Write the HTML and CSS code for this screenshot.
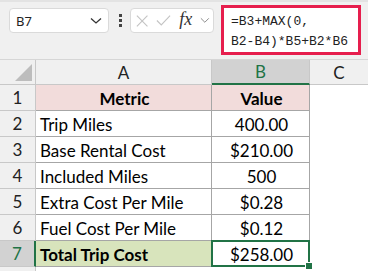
FILE: index.html
```html
<!DOCTYPE html>
<html lang="en">
<head>
    <meta charset="UTF-8">
    <title>Trip Cost</title>
    <link rel="stylesheet" href="styles.css">
</head>
<body>
    <div class="toolbar">
        <div class="namebox">
            <span>B7</span>
            <svg width="12" height="8" viewBox="0 0 12 8"><path d="M1 1.5 L6 6 L11 1.5" fill="none" stroke="#333" stroke-width="1.3"/></svg>
        </div>
        <div class="dots"><i></i><i></i><i></i></div>
        <div class="fxbox">
            <svg width="14" height="14" viewBox="0 0 14 14"><path d="M1 1 L13 13 M13 1 L1 13" stroke="#c4c4c4" stroke-width="1.3"/></svg>
            <svg width="17" height="13" viewBox="0 0 17 13"><path d="M1 6.5 L6 11.5 L16 1" fill="none" stroke="#c4c4c4" stroke-width="1.3"/></svg>
            <span class="fx">fx</span>
            <svg width="11" height="7" viewBox="0 0 11 7"><path d="M1 1 L5.5 5.5 L10 1" fill="none" stroke="#888" stroke-width="1.1"/></svg>
        </div>
        <div class="formula">=B3+MAX(0,<br>B2-B4)*B5+B2*B6</div>
    </div>

    <div class="sheet">
        <div class="corner"><span class="tri"></span></div>
        <div class="colhead">A</div>
        <div class="colhead sel">B</div>
        <div class="colhead last">C</div>

        <div class="rowhead">1</div>
        <div class="cell head">Metric</div>
        <div class="cell head">Value</div>
        <div class="blank"></div>

        <div class="rowhead">2</div>
        <div class="cell">Trip Miles</div>
        <div class="cell num">400.00</div>
        <div class="blank"></div>

        <div class="rowhead">3</div>
        <div class="cell">Base Rental Cost</div>
        <div class="cell num">$210.00</div>
        <div class="blank"></div>

        <div class="rowhead">4</div>
        <div class="cell">Included Miles</div>
        <div class="cell num">500</div>
        <div class="blank"></div>

        <div class="rowhead">5</div>
        <div class="cell">Extra Cost Per Mile</div>
        <div class="cell num">$0.28</div>
        <div class="blank"></div>

        <div class="rowhead">6</div>
        <div class="cell">Fuel Cost Per Mile</div>
        <div class="cell num">$0.12</div>
        <div class="blank"></div>

        <div class="rowhead selrow">7</div>
        <div class="cell total">Total Trip Cost</div>
        <div class="cell num active">$258.00</div>
        <div class="blank"></div>

        <div class="rowhead stub"></div>
        <div class="blank"></div>
        <div class="blank"></div>
        <div class="blank"></div>
    </div>
</body>
</html>
```

FILE: styles.css
```css
body {
    margin: 0;
    background: #fff;
    font-family: Lato, "Liberation Sans", sans-serif;
    color: #000;
    overflow: hidden;
}
.toolbar {
    height: 60px;
    box-sizing: border-box;
    background: #f0f0f0;
    border-top: 2px solid #e3e3e3;
    border-bottom: 1px solid #d6d6d6;
    display: flex;
    align-items: flex-start;
}
.namebox {
    margin: 6px 0 0 9px;
    width: 100px;
    height: 25px;
    box-sizing: border-box;
    background: #fff;
    border: 1px solid #dadada;
    border-radius: 4px;
    display: flex;
    align-items: center;
    justify-content: space-between;
    padding: 0 6px 0 6px;
    font-family: "Noto Sans", sans-serif;
    font-size: 13px;
    color: #222;
}
.dots {
    margin: 12px 0 0 10px;
    width: 3px;
    display: flex;
    flex-direction: column;
    gap: 2px;
}
.dots i {
    display: block;
    width: 3px;
    height: 3px;
    background: #444;
}
.fxbox {
    margin: 6px 0 0 8px;
    width: 84px;
    height: 25px;
    box-sizing: border-box;
    background: #fff;
    border: 1px solid #dadada;
    border-radius: 4px;
    display: flex;
    align-items: center;
    gap: 8px;
    padding: 0 3px 0 5px;
}
.fx {
    font-family: "Liberation Serif", serif;
    font-style: italic;
    font-size: 18px;
    color: #333;
    margin-top: -2px;
}
.formula {
    margin: 3px 0 0 7px;
    width: 140px;
    height: 50px;
    box-sizing: border-box;
    border: 3px solid #e61e4d;
    background: #fff;
    padding: 4px 0 0 7px;
    font-family: "Liberation Mono", monospace;
    font-size: 13px;
    line-height: 20px;
    color: #222;
}
.sheet {
    display: grid;
    grid-template-columns: 36px 176px 98px 58px;
    grid-template-rows: 25px repeat(7, 26px) 4px;
    font-size: 17px;
}
.sheet > div {
    box-sizing: border-box;
}
.corner {
    background: #f0f0f0;
    border-right: 1px solid #c8c8c8;
    border-bottom: 1px solid #c8c8c8;
    position: relative;
}
.tri {
    position: absolute;
    right: 3px;
    bottom: 3px;
    width: 0;
    height: 0;
    border-left: 17px solid transparent;
    border-bottom: 17px solid #bdbdbd;
}
.colhead {
    background: #f0f0f0;
    border-right: 1px solid #c8c8c8;
    border-bottom: 1px solid #c8c8c8;
    display: flex;
    align-items: center;
    justify-content: center;
    font-size: 17px;
    color: #222;
}
.colhead.sel {
    background: #d2d2d2;
    color: #217346;
    border-bottom: 2px solid #217346;
}
.colhead.last {
    border-right: none;
}
.rowhead {
    background: #f0f0f0;
    border-right: 1px solid #c8c8c8;
    border-bottom: 1px solid #c8c8c8;
    display: flex;
    align-items: center;
    justify-content: center;
    color: #222;
}
.rowhead.selrow {
    background: #d2d2d2;
    color: #217346;
    border-right: 2px solid #217346;
}
.rowhead.stub {
    border-bottom: none;
}
.cell {
    border-right: 1px solid #a6a6a6;
    border-bottom: 1px solid #a6a6a6;
    display: flex;
    align-items: center;
    padding: 1px 2px 0 4px;
    white-space: nowrap;
    overflow: hidden;
}
.cell.head {
    background: #f2dcdb;
    font-weight: bold;
    justify-content: center;
}
.cell.num {
    justify-content: center;
}
.cell.total {
    background: #d8e4bc;
    font-weight: bold;
}
.cell.active {
    position: relative;
    overflow: visible;
}
.cell.active::after {
    content: "";
    position: absolute;
    left: -1px;
    top: -1px;
    right: -1px;
    bottom: -1px;
    border: 2px solid #217346;
}
.cell.active::before {
    content: "";
    position: absolute;
    right: -4px;
    bottom: -4px;
    width: 6px;
    height: 6px;
    background: #217346;
    border: 1px solid #fff;
    z-index: 1;
}
.blank {
    background: #fff;
}
```
